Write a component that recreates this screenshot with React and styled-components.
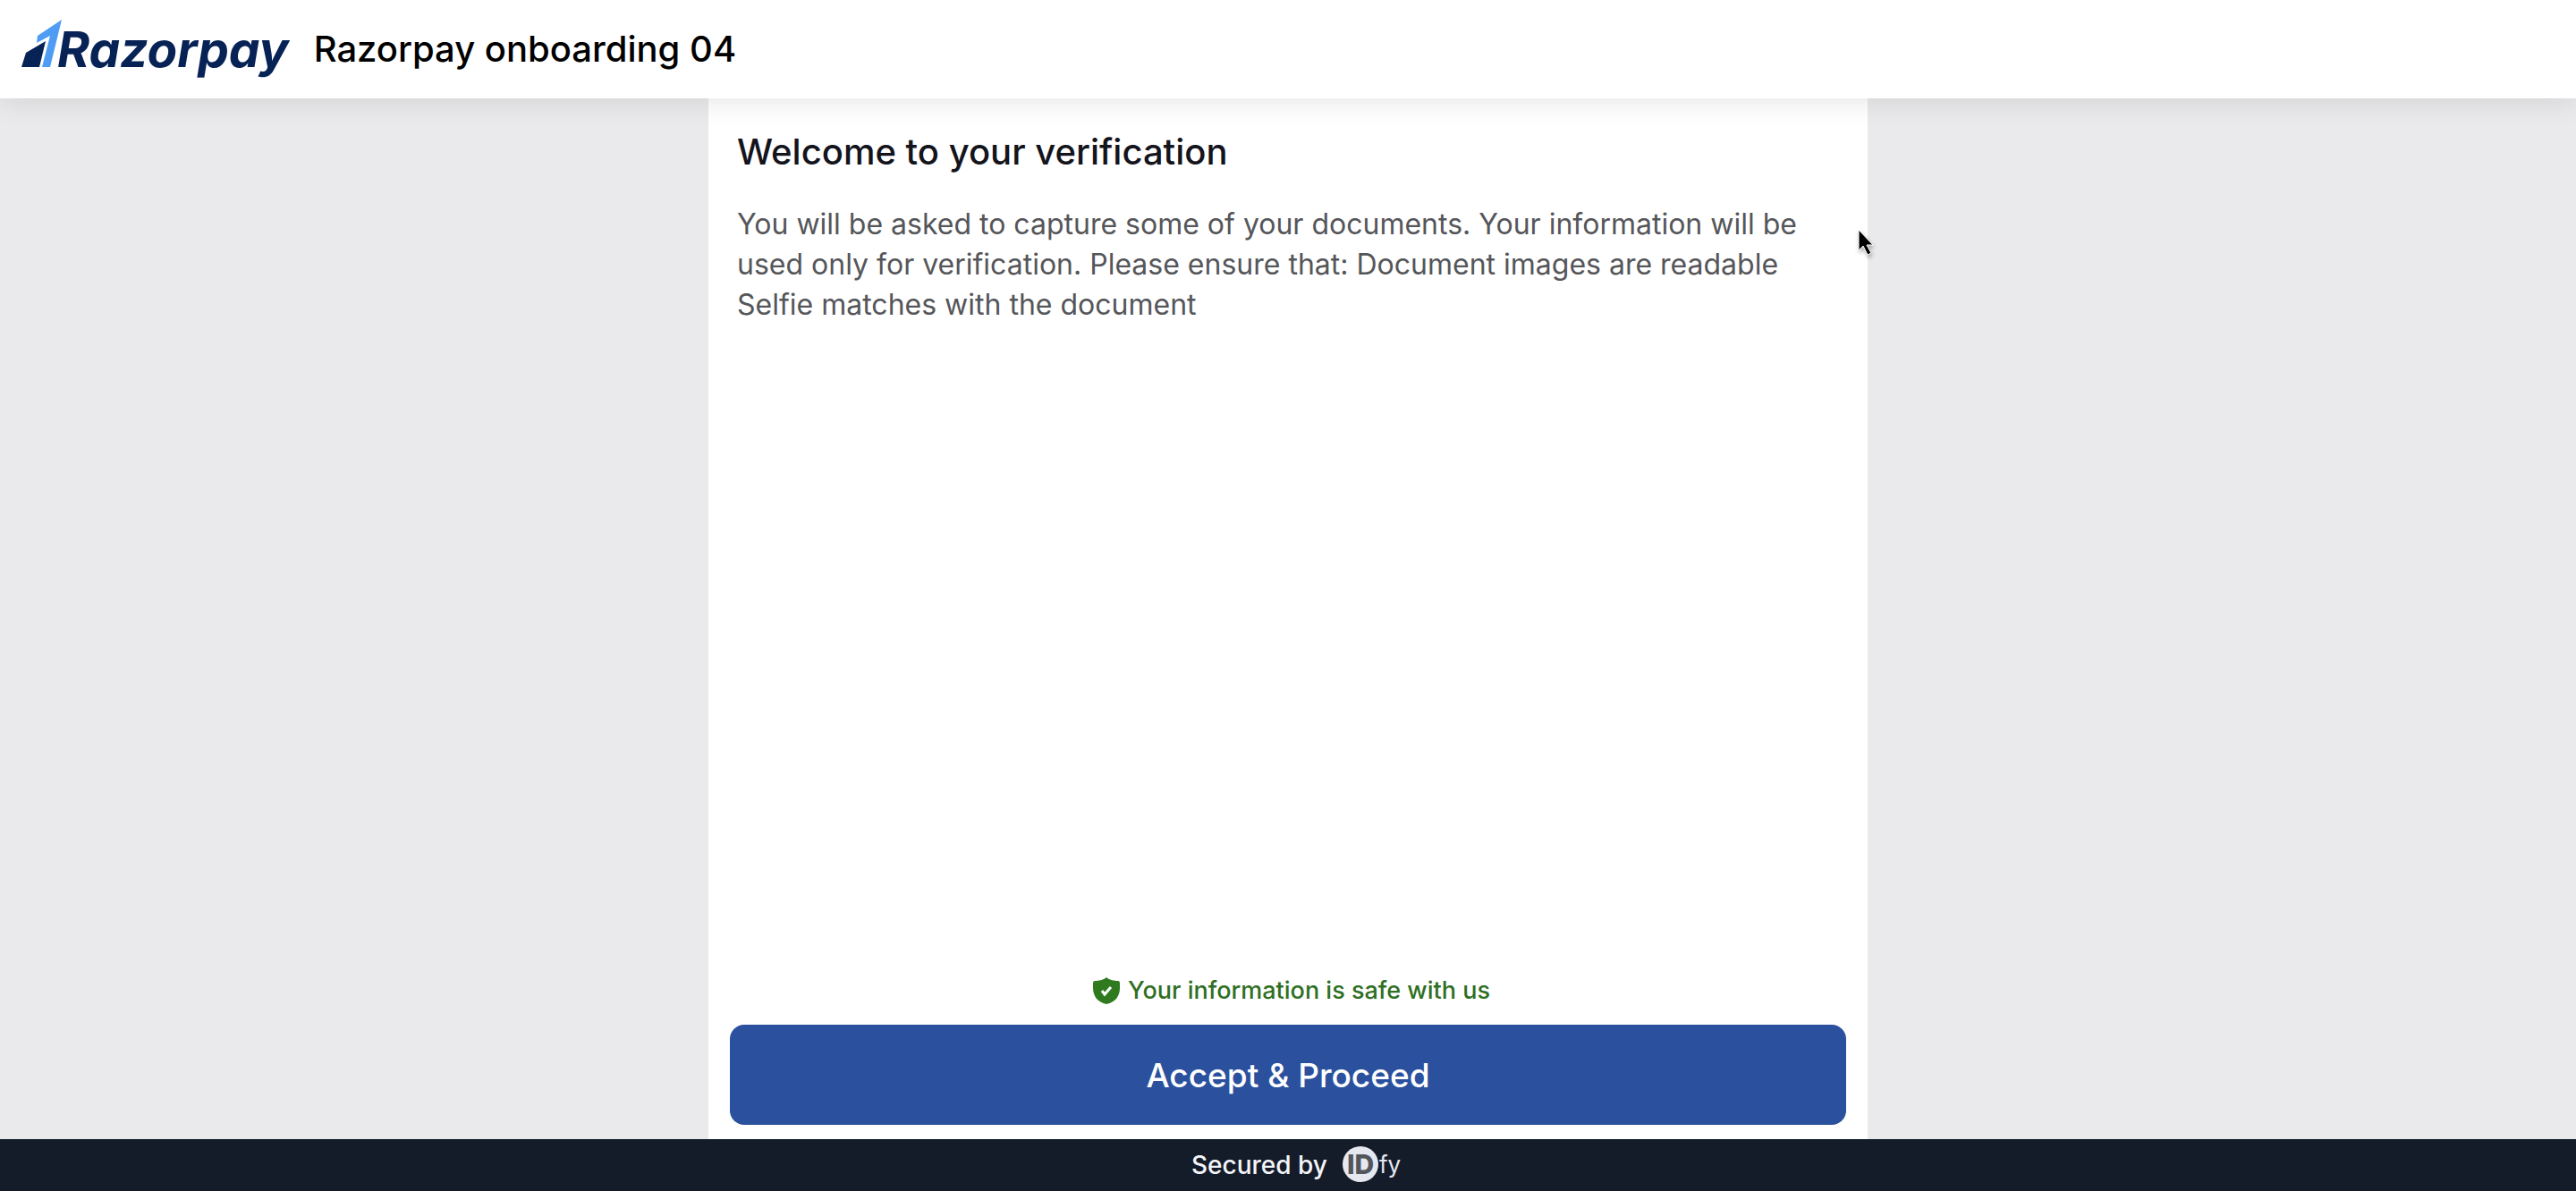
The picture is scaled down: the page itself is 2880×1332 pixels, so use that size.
import React from 'react';
import styled, { createGlobalStyle } from 'styled-components';

const App = () => {
  return (
    <Page>
      <GlobalStyle />
      <Header>
        <Brand href="#">
          <BrandMark />
          <BrandName>Razorpay</BrandName>
        </Brand>
        <Title>Razorpay onboarding 04</Title>
      </Header>
      <Card>
        <Heading>Welcome to your verification</Heading>
        <Description>
          You will be asked to capture some of your documents. Your information will be
          used only for verification. Please ensure that: Document images are readable
          Selfie matches with the document
        </Description>
        <Actions>
          <SafeNote>
            <ShieldIcon />
            Your information is safe with us
          </SafeNote>
          <ProceedButton type="button">Accept &amp; Proceed</ProceedButton>
        </Actions>
        <Pointer />
      </Card>
      <Footer>
        Secured by
        <IdfyLogo />
      </Footer>
    </Page>
  );
}

const BrandMark = () => (
  <MarkIcon width="40" height="54" viewBox="0 0 40 54" aria-hidden="true">
    <path d="M18 18 L45 0 L32 53 H23 L32 18 L17 26 Z" fill="#4f9cf5" />
    <path d="M5 37 L27 24 L20 53 H0 Z" fill="#072255" />
  </MarkIcon>
);

const ShieldIcon = () => (
  <svg width="30" height="32" viewBox="0 0 30 32" aria-hidden="true">
    <path d="M15 1 C18 4 24 5 28 5 Q30 5 30 8 V13 C30 22 25 29 15 31 C5 29 0 22 0 13 V8 Q0 5 2 5 C6 5 12 4 15 1 Z" fill="#2f7a1f" />
    <path d="M10 16 L13 20 L20 12" fill="none" stroke="#ffffff" strokeWidth="3" />
  </svg>
);

const IdfyLogo = () => (
  <svg width="68" height="46" viewBox="0 0 68 46" role="img" aria-label="IDfy">
    <circle cx="21" cy="22" r="20" fill="#e6e8ef" />
    <text x="6" y="33" fontFamily="Inter, sans-serif" fontSize="30" fontWeight="800" fill="#53565d">ID</text>
    <text x="42" y="32" fontFamily="Inter, sans-serif" fontSize="26" fontWeight="400" fill="#e6e8ef">fy</text>
  </svg>
);

const Pointer = () => (
  <PointerIcon width="20" height="32" viewBox="0 0 20 32" aria-hidden="true">
    <path d="M1 1 V24 L6 19 L11 29 L15 27 L10 18 H17 Z" fill="#000000" stroke="#ffffff" strokeWidth="1" />
  </PointerIcon>
);

export default App;



const GlobalStyle = createGlobalStyle`
* {
  box-sizing: border-box;
}
body {
  margin: 0;
  background: #eaeaec;
  font-family: Inter, "Noto Sans", sans-serif;
}
`;

const Page = styled.div`
display: flex;
flex-direction: column;
min-height: 100vh;
`;

const Header = styled.header`
display: flex;
align-items: center;
gap: 28px;
height: 110px;
padding: 0 24px;
background: #ffffff;
box-shadow: 0 4px 30px rgba(0, 0, 0, 0.1);
z-index: 1;
`;

const Brand = styled.a`
display: flex;
align-items: flex-start;
text-decoration: none;
`;

const MarkIcon = styled.svg`
overflow: visible;
`;

const BrandName = styled.span`
color: #072255;
font-size: 55px;
font-style: italic;
font-weight: 700;
line-height: 66px;
`;

const Title = styled.h1`
margin: 0;
color: #000000;
font-size: 40px;
font-weight: 500;
line-height: 52px;
`;

const Card = styled.main`
position: relative;
display: flex;
flex: 1;
flex-direction: column;
align-self: center;
width: 45%;
padding: 34px 24px 16px;
background: #ffffff;
`;

const Heading = styled.h2`
margin: 0 8px 32px;
color: #14141c;
font-size: 40px;
font-weight: 500;
line-height: 52px;
`;

const Description = styled.p`
margin: 0 8px;
color: #55565a;
font-size: 32px;
font-weight: 400;
line-height: 45px;
`;

const Actions = styled.div`
display: flex;
flex-direction: column;
gap: 18px;
margin-top: auto;
`;

const SafeNote = styled.div`
display: flex;
align-items: center;
justify-content: center;
gap: 9px;
padding-left: 8px;
color: #2f6f24;
font-size: 27px;
font-weight: 500;
line-height: 40px;
`;

const ProceedButton = styled.button`
height: 112px;
border: 0;
border-radius: 16px;
background: #2b519e;
color: #ffffff;
font-family: inherit;
font-size: 37px;
font-weight: 500;
cursor: pointer;
`;

const PointerIcon = styled.svg`
position: absolute;
top: 146px;
right: -9px;
filter: drop-shadow(1px 3px 2px rgba(0, 0, 0, 0.3));
`;

const Footer = styled.footer`
display: flex;
align-items: center;
justify-content: center;
gap: 16px;
height: 58px;
padding-left: 20px;
background: #141c2a;
color: #f4f5f8;
font-size: 28px;
font-weight: 500;
`;
